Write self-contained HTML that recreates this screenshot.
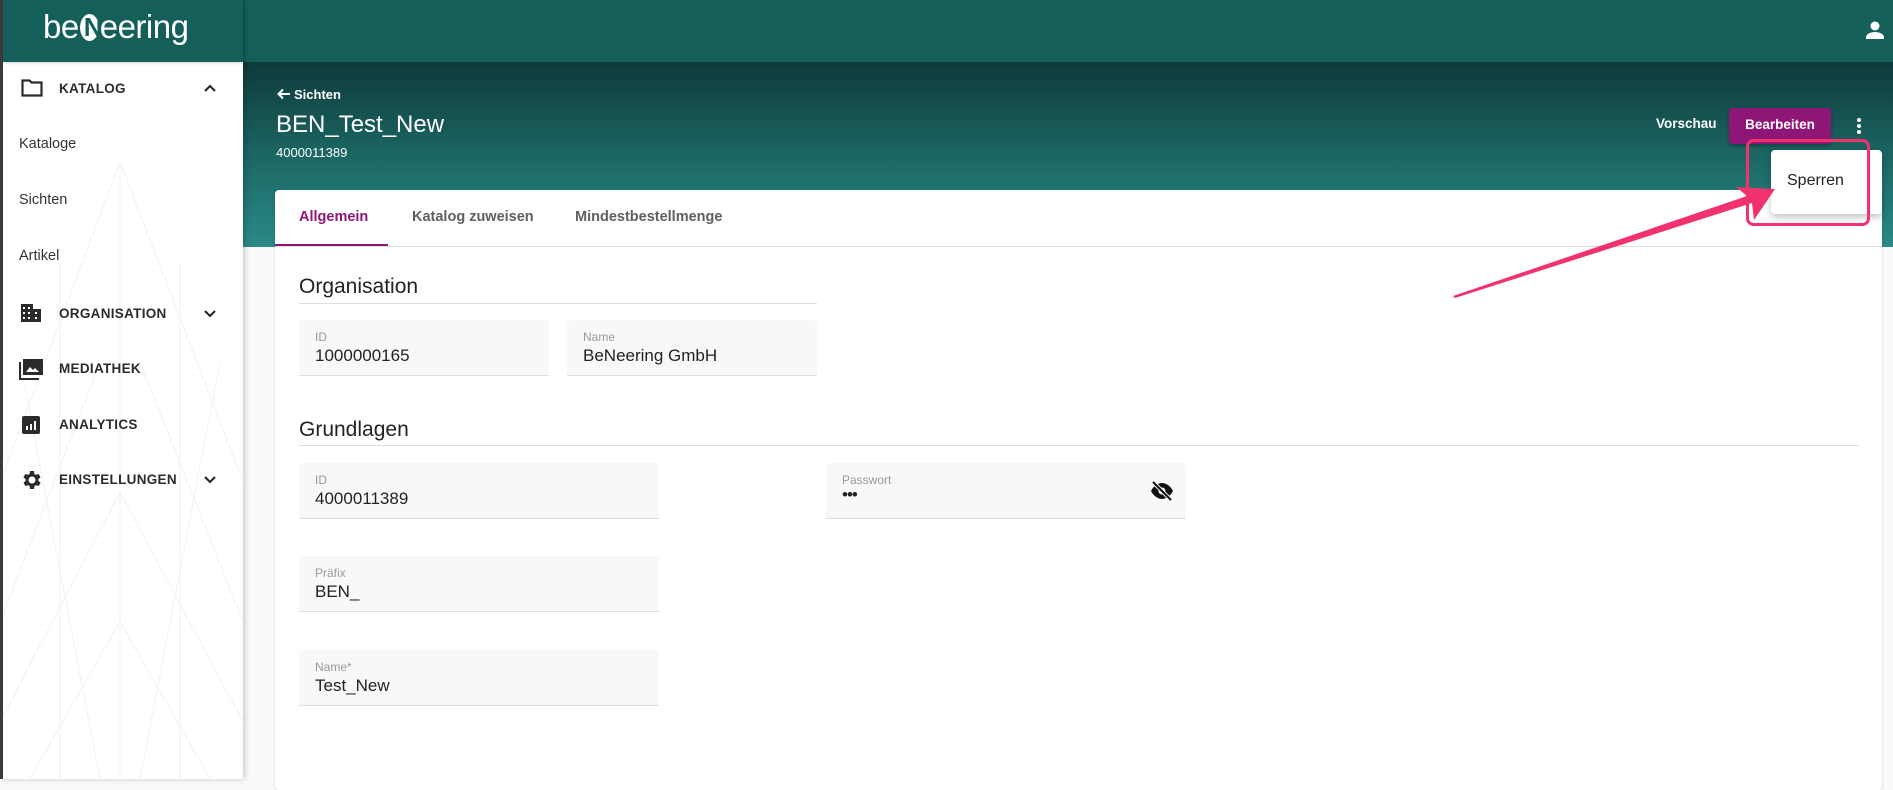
<!DOCTYPE html>
<html><head><meta charset="utf-8"><style>
*{box-sizing:border-box;margin:0;padding:0}
body{width:1893px;height:779px;overflow:hidden;font-family:"Liberation Sans",Arial,sans-serif;background:#fafafa;position:relative}
.abs{position:absolute}
#top{left:0;top:0;width:1893px;height:62px;background:#155f5b}
#banner{left:243px;top:62px;width:1650px;height:185px;background:linear-gradient(#0e3a3a,#1d6a67 55%,#2a8a87)}
#side{left:0;top:62px;width:243px;height:717px;background:#fff;box-shadow:2px 0 6px rgba(0,0,0,.2)}
#sidehead{left:0;top:0;width:243px;height:62px;background:#155f5b;box-shadow:2px 0 4px rgba(0,0,0,.25)}
#lborder{left:0;top:0;width:3px;height:779px;background:#3a3a3a}
.nav{position:absolute;left:59px;font-size:13.5px;font-weight:bold;color:#2b2b2b;letter-spacing:.3px}
.sub{position:absolute;left:19px;font-size:14.5px;color:#333}
.chev{position:absolute;left:204px}
.card{left:275px;top:190px;width:1607px;height:600px;background:#fff;border-radius:4px;box-shadow:0 1px 3px rgba(0,0,0,.15)}
.tab{position:absolute;top:209px;font-size:14.5px;font-weight:bold;color:#5f5f5f}
.h{position:absolute;left:299px;font-size:21px;color:#222}
.line{position:absolute;height:1px;background:#ddd}
.f{position:absolute;background:#f8f8f8;border-bottom:1px solid #ddd;border-radius:4px 4px 0 0}
.f .l{position:absolute;left:16px;top:10px;font-size:12px;color:#999}
.f .v{position:absolute;left:16px;top:26px;font-size:17px;color:#222}
</style></head><body>
<div class="abs" id="top"></div>
<div class="abs" id="banner"></div>
<div class="abs" id="side">
<svg width="243" height="717" style="position:absolute;left:0;top:0" stroke="#f1f1f1" stroke-width="1" fill="none">
<path d="M120 100 L0 420 M120 100 L243 420 M120 100 L120 717 M100 300 L0 560 M140 300 L243 560 M120 430 L0 660 M120 430 L243 660 M120 560 L30 717 M120 560 L210 717 M60 200 L60 717 M180 200 L180 717 M20 300 L100 717 M220 300 L140 717"/>
</svg>
</div>
<div class="abs" id="sidehead">
<div style="position:absolute;left:43px;top:8px;font-size:33px;color:#fff;letter-spacing:-.5px;white-space:nowrap">be<span style="display:inline-block;width:19px;height:27px;background:#fff;border-radius:50%;vertical-align:-3px;margin:0 1px;position:relative"><span style="position:absolute;left:4px;top:0;font-size:26px;color:#155f5b;font-weight:bold;line-height:27px">N</span></span>eering</div>
</div>
<div class="abs" id="lborder"></div>

<svg class="abs" style="left:21px;top:79px" width="22" height="18" viewBox="0 0 22 18"><path d="M1.5 1.5h7l2 2h10v13h-19z" fill="none" stroke="#2b2b2b" stroke-width="2.2"/></svg>
<div class="nav" style="top:81px">KATALOG</div>
<svg class="chev" style="top:84px" width="12" height="8"><path d="M1 7l5-5 5 5" stroke="#222" stroke-width="2" fill="none"/></svg>
<div class="sub" style="top:136px">Kataloge</div>
<div class="sub" style="top:192px">Sichten</div>
<div class="sub" style="top:248px">Artikel</div>
<svg class="abs" style="left:21px;top:304px" width="20" height="18"><rect x="0" y="0" width="12" height="18" fill="#2b2b2b"/><rect x="12" y="5" width="8" height="13" fill="#2b2b2b"/><g fill="#fff"><rect x="2" y="3" width="2" height="2"/><rect x="7" y="3" width="2" height="2"/><rect x="2" y="8" width="2" height="2"/><rect x="7" y="8" width="2" height="2"/><rect x="2" y="13" width="2" height="2"/><rect x="7" y="13" width="2" height="2"/><rect x="14" y="8" width="2" height="2"/><rect x="14" y="13" width="2" height="2"/></g></svg>
<div class="nav" style="top:306px">ORGANISATION</div>
<svg class="chev" style="top:310px" width="12" height="8"><path d="M1 1l5 5 5-5" stroke="#222" stroke-width="2" fill="none"/></svg>
<svg class="abs" style="left:19px;top:359px" width="24" height="21"><path d="M1 3v17h19" stroke="#2b2b2b" stroke-width="2" fill="none"/><rect x="4" y="0" width="20" height="16" fill="#2b2b2b"/><path d="M7 13l4-5 3 3 2-2 4 4z" fill="#fff"/></svg>
<div class="nav" style="top:361px">MEDIATHEK</div>
<svg class="abs" style="left:22px;top:416px" width="18" height="18"><rect width="18" height="18" rx="2" fill="#2b2b2b"/><rect x="4" y="10" width="2" height="4" fill="#fff"/><rect x="8" y="8" width="2" height="6" fill="#fff"/><rect x="12" y="5" width="2" height="9" fill="#fff"/></svg>
<div class="nav" style="top:417px">ANALYTICS</div>
<svg class="abs" style="left:19px;top:468px" width="24" height="24" viewBox="0 0 24 24"><path fill="#2b2b2b" d="M19.4 13a7.5 7.5 0 000-2l2.1-1.6-2-3.5-2.5 1a7.3 7.3 0 00-1.7-1L15 3h-4l-.4 2.9a7.3 7.3 0 00-1.7 1l-2.5-1-2 3.5L6.6 11a7.5 7.5 0 000 2l-2.1 1.6 2 3.5 2.5-1a7.3 7.3 0 001.7 1L11 21h4l.4-2.9a7.3 7.3 0 001.7-1l2.5 1 2-3.5zM13 15.5a3.5 3.5 0 110-7 3.5 3.5 0 010 7z"/></svg>
<div class="nav" style="top:472px">EINSTELLUNGEN</div>
<svg class="chev" style="top:476px" width="12" height="8"><path d="M1 1l5 5 5-5" stroke="#222" stroke-width="2" fill="none"/></svg>

<svg class="abs" style="left:1866px;top:21px" width="18" height="18"><circle cx="9" cy="5" r="4.5" fill="#fff"/><path d="M0 18v-2c0-3 5-5 9-5s9 2 9 5v2z" fill="#fff"/></svg>

<svg class="abs" style="left:277px;top:88px" width="14" height="12"><path d="M13 6H2M6 1.5L1.5 6 6 10.5" stroke="#fff" stroke-width="2" fill="none"/></svg>
<div class="abs" style="left:294px;top:87px;color:#fff;font-size:13px;font-weight:bold">Sichten</div>
<div class="abs" style="left:276px;top:111px;color:#fff;font-size:24px">BEN_Test_New</div>
<div class="abs" style="left:276px;top:145px;color:#fff;font-size:13px">4000011389</div>
<div class="abs" style="left:1656px;top:116px;color:#fff;font-size:13.5px;font-weight:bold">Vorschau</div>
<div class="abs" style="left:1729px;top:108px;width:102px;height:36px;background:#8e1677;border-radius:3px;color:#fff;font-size:13.5px;font-weight:bold;text-align:center;line-height:34px;box-shadow:0 2px 3px rgba(0,0,0,.3)">Bearbeiten</div>
<svg class="abs" style="left:1856px;top:117px" width="6" height="18"><circle cx="3" cy="3" r="2" fill="#fff"/><circle cx="3" cy="9" r="2" fill="#fff"/><circle cx="3" cy="15" r="2" fill="#fff"/></svg>

<div class="abs card"></div>
<div class="tab" style="left:299px;color:#8e1677">Allgemein</div>
<div class="tab" style="left:412px">Katalog zuweisen</div>
<div class="tab" style="left:575px">Mindestbestellmenge</div>
<div class="abs" style="left:275px;top:244px;width:113px;height:3px;background:#8e1677"></div>
<div class="line" style="left:275px;top:246px;width:1607px"></div>

<div class="h" style="top:275px">Organisation</div>
<div class="line" style="left:299px;top:303px;width:518px"></div>
<div class="f" style="left:299px;top:320px;width:250px;height:56px"><div class="l">ID</div><div class="v">1000000165</div></div>
<div class="f" style="left:567px;top:320px;width:250px;height:56px"><div class="l">Name</div><div class="v">BeNeering GmbH</div></div>

<div class="h" style="top:418px">Grundlagen</div>
<div class="line" style="left:299px;top:445px;width:1560px"></div>
<div class="f" style="left:299px;top:463px;width:360px;height:56px"><div class="l">ID</div><div class="v">4000011389</div></div>
<div class="f" style="left:826px;top:463px;width:360px;height:56px"><div class="l">Passwort</div><div class="v" style="top:22px;letter-spacing:-1px">•••</div>
<svg style="position:absolute;left:324px;top:18px" width="24" height="20" viewBox="0 0 24 20"><path d="M1 10c3-6 8-8 11-8s8 2 11 8c-3 6-8 8-11 8s-8-2-11-8z" fill="#111"/><circle cx="12" cy="10" r="3.5" fill="#f8f8f8"/><path d="M3 1l18 18" stroke="#f8f8f8" stroke-width="4"/><path d="M3 1l18 18" stroke="#111" stroke-width="2"/></svg></div>
<div class="f" style="left:299px;top:556px;width:360px;height:56px"><div class="l">Präfix</div><div class="v">BEN_</div></div>
<div class="f" style="left:299px;top:650px;width:360px;height:56px"><div class="l">Name*</div><div class="v">Test_New</div></div>

<div class="abs" style="left:1771px;top:150px;width:111px;height:64px;background:#fff;border-radius:4px;box-shadow:0 3px 8px rgba(0,0,0,.25)"><div style="position:absolute;left:16px;top:22px;font-size:16px;color:#222">Sperren</div></div>
<svg class="abs" style="left:0;top:0" width="1893" height="779">
<rect x="1747.5" y="140.5" width="121" height="84" rx="6" fill="none" stroke="#f2326c" stroke-width="3"/>
<path d="M1455 298 L1752 203 L1754 220 L1775 189 L1736 187 L1747 196 L1453 296 Z" fill="#f2326c"/>
</svg>
</body></html>
